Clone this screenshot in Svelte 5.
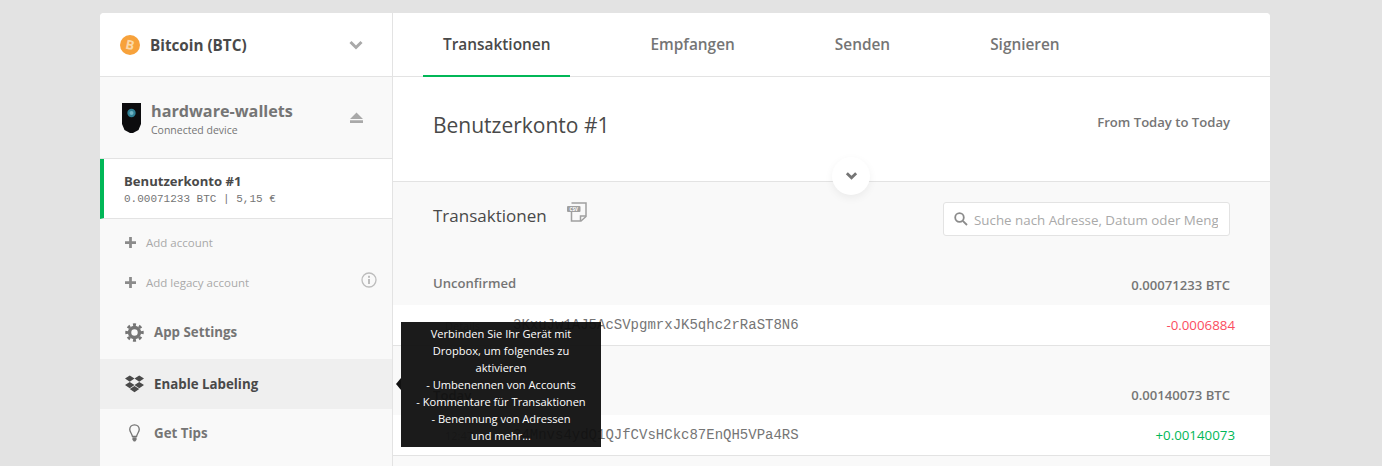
<script>
    const tabs = ['Transaktionen', 'Empfangen', 'Senden', 'Signieren'];
    const groups = [
        {
            label: 'Unconfirmed',
            total: '0.00071233 BTC',
            time: 'Details',
            address: '3KxuJw1AJ5AcSVpgmrxJK5qhc2rRaST8N6',
            amount: '-0.0006884',
            kind: 'out'
        },
        {
            label: 'Today',
            total: '0.00140073 BTC',
            time: '12:47',
            address: '34Mnvs4ydQ1QJfCVsHCkc87EnQH5VPa4RS',
            amount: '+0.00140073',
            kind: 'in'
        }
    ];
</script>

<div class="page">
    <div class="app">
        <aside class="sidebar">
            <div class="coin">
                <svg class="coin-logo" viewBox="0 0 20 20">
                    <circle cx="10" cy="10" r="10" fill="#f7a23b" />
                    <text x="10" y="14.5" text-anchor="middle" transform="rotate(12 10 10)">B</text>
                </svg>
                <span class="coin-name">Bitcoin (BTC)</span>
                <svg class="chevron" viewBox="0 0 14 10">
                    <polyline points="1.5,2 7,7.5 12.5,2" />
                </svg>
            </div>

            <div class="device">
                <svg class="device-img" viewBox="0 0 19 30">
                    <path d="M0 0H19V21L16.500 27L11 30H8L2.500 27L0 21Z" fill="#0c0c0e" />
                    <circle cx="9.5" cy="10" r="4.2" fill="#2f7f94" />
                    <circle cx="9.5" cy="10" r="2" fill="#6fb4c4" />
                </svg>
                <div class="device-info">
                    <div class="device-name">hardware-wallets</div>
                    <div class="device-status">Connected device</div>
                </div>
                <svg class="eject" viewBox="0 0 14 12">
                    <path d="M7 0L14 7H0Z M0 8.500H14V11.500H0Z" />
                </svg>
            </div>

            <div class="account">
                <div class="account-name">Benutzerkonto #1</div>
                <div class="account-balance">0.00071233 BTC | 5,15 €</div>
            </div>

            <div class="add-row first">
                <svg class="plus" viewBox="0 0 12 12"><path d="M4.500 0H7.500V4.500H12V7.500H7.500V12H4.500V7.500H0V4.500H4.500Z" /></svg>
                <span>Add account</span>
            </div>
            <div class="add-row">
                <svg class="plus" viewBox="0 0 12 12"><path d="M4.500 0H7.500V4.500H12V7.500H7.500V12H4.500V7.500H0V4.500H4.500Z" /></svg>
                <span>Add legacy account</span>
                <svg class="info" viewBox="0 0 16 16">
                    <circle cx="8" cy="8" r="7" />
                    <rect x="7" y="7" width="2" height="5" />
                    <rect x="7" y="3.800" width="2" height="2" />
                </svg>
            </div>

            <div class="nav-row settings">
                <svg class="nav-icon" viewBox="0 0 20 20">
                    <circle class="gear-ring" cx="10" cy="10" r="5.200" />
                    <circle class="gear-teeth" cx="10" cy="10" r="8.200" pathLength="16" />
                </svg>
                <span>App Settings</span>
            </div>
            <div class="nav-row active">
                <svg class="nav-icon" viewBox="0 0 20 18">
                    <path d="M5 0L10 3.300L5 6.600L0 3.300Z M15 0L20 3.300L15 6.600L10 3.300Z M5 6.800L10 10.100L5 13.400L0 10.100Z M15 6.800L20 10.100L15 13.400L10 10.100Z M5 14.300L10 11.100L15 14.300L10 17.600Z" />
                </svg>
                <span>Enable Labeling</span>
            </div>
            <div class="nav-row tips">
                <svg class="nav-icon bulb" viewBox="0 0 20 20">
                    <path class="bulb-glass" d="M10 1.500C6.800 1.500 5 3.800 5 6.300C5 9 7.300 10.500 7.800 13.500H12.200C12.700 10.500 15 9 15 6.300C15 3.800 13.200 1.500 10 1.500Z" />
                    <path class="bulb-base" d="M7.800 14.500H12.200V17L10.800 19H9.200L7.800 17Z" />
                </svg>
                <span>Get Tips</span>
            </div>

            <div class="tooltip">
                <span class="tooltip-arrow"></span>
                Verbinden Sie Ihr Gerät mit Dropbox, um folgendes zu aktivieren<br />
                - Umbenennen von Accounts<br />
                - Kommentare für Transaktionen<br />
                - Benennung von Adressen<br />
                und mehr...
            </div>
        </aside>

        <main class="content">
            <nav class="tabs">
                {#each tabs as tab, i}
                    <div class="tab" class:selected={i === 0}>{tab}</div>
                {/each}
            </nav>

            <section class="summary">
                <h2>Benutzerkonto #1</h2>
                <div class="range">From Today to Today</div>
                <div class="toggle">
                    <svg viewBox="0 0 14 10"><polyline points="2,2 7,7 12,2" /></svg>
                </div>
            </section>

            <section class="history">
                <div class="history-head">
                    <h3>Transaktionen</h3>
                    <svg class="csv" viewBox="0 0 20 20">
                        <path class="csv-page" d="M4.500 4V19H14L19 14.500V1H4.500" />
                        <path class="csv-fold" d="M13.500 19V14H19" />
                        <rect class="csv-badge" x="0" y="4" width="13.500" height="6" rx="1" />
                        <text x="6.750" y="8.800">CSV</text>
                    </svg>
                    <label class="search">
                        <svg viewBox="0 0 14 14">
                            <circle cx="5.500" cy="5.500" r="4.300" />
                            <line x1="8.800" y1="8.800" x2="13" y2="13" />
                        </svg>
                        <input type="text" placeholder="Suche nach Adresse, Datum oder Menge" />
                    </label>
                </div>

                {#each groups as group}
                    <div class="group">
                        <div class="group-head">
                            <span class="group-label">{group.label}</span>
                            <span class="group-total">{group.total}</span>
                        </div>
                        <div class="tx">
                            <span class="tx-time">{group.time}</span>
                            <span class="tx-address">{group.address}</span>
                            <span class="tx-amount {group.kind}">{group.amount}</span>
                        </div>
                    </div>
                {/each}
            </section>
        </main>
    </div>
</div>

<style>
    :global(body) {
        margin: 0;
        background: #e3e3e3;
        overflow: hidden;
    }

    .page {
        height: 466px;
        overflow: hidden;
        padding-top: 13px;
        box-sizing: border-box;
        font-family: 'Open Sans', sans-serif;
        color: #494949;
    }

    .app {
        width: 1170px;
        height: 600px;
        margin-left: 100px;
        display: flex;
        background: #f9f9f9;
        border-radius: 4px 4px 0 0;
    }

    /* left column */
    .sidebar {
        position: relative;
        width: 292px;
        flex-shrink: 0;
        border-right: 1px solid #e3e3e3;
    }

    .coin {
        height: 63px;
        display: flex;
        align-items: center;
        padding: 0 29px 0 20px;
        background: #fff;
        border-bottom: 1px solid #e3e3e3;
        border-radius: 4px 0 0 0;
    }

    .coin-logo {
        width: 20px;
        height: 20px;
        margin-right: 10px;
    }

    .coin-logo text {
        font: 700 13px 'Open Sans', sans-serif;
        fill: #fbd9a8;
    }

    .coin-name {
        flex: 1;
        font-size: 15.250px;
        font-weight: 700;
        color: #494949;
    }

    .chevron {
        width: 14px;
        height: 10px;
        fill: none;
        stroke: #a9a9a9;
        stroke-width: 3;
    }

    .device {
        height: 81px;
        display: flex;
        align-items: center;
        padding: 0 29px 0 22px;
        border-bottom: 1px solid #e3e3e3;
    }

    .device-img {
        width: 19px;
        height: 30px;
        margin-right: 10px;
    }

    .device-info {
        flex: 1;
        padding-top: 2px;
    }

    .device-name {
        font-size: 16.200px;
        font-weight: 700;
        line-height: 23px;
        color: #757575;
    }

    .device-status {
        font-size: 10.500px;
        line-height: 15px;
        color: #757575;
    }

    .eject {
        width: 13px;
        height: 12px;
        fill: #a9a9a9;
    }

    .account {
        height: 60px;
        padding: 13px 0 0 20px;
        box-sizing: border-box;
        background: #fff;
        border-left: 4px solid #01b757;
        border-bottom: 1px solid #e3e3e3;
    }

    .account-name {
        font-size: 13.100px;
        font-weight: 700;
        line-height: 18px;
        color: #494949;
    }

    .account-balance {
        font-family: 'Liberation Mono', monospace;
        font-size: 11px;
        line-height: 18px;
        color: #757575;
    }

    .add-row {
        height: 40px;
        display: flex;
        align-items: center;
        padding: 0 15px 0 25px;
        font-size: 11.500px;
        color: #a9a9a9;
    }

    .add-row.first {
        margin-top: 3px;
    }

    .add-row span {
        flex: 1;
    }

    .plus {
        width: 11px;
        height: 11px;
        margin-right: 10px;
        fill: #8b8b8b;
    }

    .info {
        width: 16px;
        height: 16px;
        margin-top: -5px;
        fill: #bdbdbd;
    }

    .info circle {
        fill: none;
        stroke: #bdbdbd;
        stroke-width: 1.300;
    }

    .nav-row {
        height: 50px;
        display: flex;
        align-items: center;
        padding-left: 25px;
        font-size: 13.300px;
        font-weight: 700;
        color: #757575;
    }

    .nav-row.settings {
        margin-top: 3px;
        height: 54px;
    }

    .nav-row.active {
        background: #efefef;
        color: #494949;
    }

    .nav-row.tips {
        height: 48px;
    }

    .nav-icon {
        width: 19px;
        height: 18px;
        margin-right: 10px;
        fill: #494949;
    }

    .settings .nav-icon {
        height: 19px;
        width: 19px;
    }

    .gear-ring {
        fill: none;
        stroke: #757575;
        stroke-width: 3.600;
    }

    .gear-teeth {
        fill: none;
        stroke: #757575;
        stroke-width: 3;
        stroke-dasharray: 1 1;
        stroke-dashoffset: 0.500;
    }

    .bulb {
        height: 20px;
    }

    .bulb-glass {
        fill: none;
        stroke: #757575;
        stroke-width: 1.400;
    }

    .bulb-base {
        fill: #757575;
    }

    .tooltip {
        position: absolute;
        z-index: 5;
        left: 301px;
        top: 309px;
        width: 200px;
        height: 125px;
        padding: 3px 10px 0;
        box-sizing: border-box;
        background: rgba(15, 15, 15, 0.95);
        color: #fff;
        font-size: 11.100px;
        line-height: 17px;
        text-align: center;
    }

    .tooltip-arrow {
        position: absolute;
        left: -5px;
        top: 56px;
        border-style: solid;
        border-width: 6px 5px 6px 0;
        border-color: transparent #111 transparent transparent;
    }

    /* right column */
    .content {
        flex: 1;
        min-width: 0;
    }

    .tabs {
        height: 63px;
        display: flex;
        padding-left: 30px;
        gap: 60px;
        background: #fff;
        border-bottom: 1px solid #e3e3e3;
        border-radius: 0 4px 0 0;
    }

    .tab {
        height: 64px;
        box-sizing: border-box;
        padding: 0 20px;
        line-height: 63px;
        font-size: 15.400px;
        font-weight: 600;
        color: #757575;
    }

    .tab.selected {
        color: #494949;
        border-bottom: 2px solid #01b757;
    }

    .summary {
        position: relative;
        height: 104px;
        display: flex;
        justify-content: space-between;
        padding: 0 40px;
        background: #fff;
        border-bottom: 1px solid #e3e3e3;
    }

    .summary h2 {
        margin: 34px 0 0;
        font-size: 21px;
        font-weight: 400;
        line-height: 28px;
        color: #494949;
    }

    .range {
        margin-top: 36px;
        font-size: 13.100px;
        font-weight: 600;
        line-height: 18px;
        color: #757575;
    }

    .toggle {
        position: absolute;
        left: 439px;
        top: 80px;
        width: 38px;
        height: 38px;
        display: flex;
        align-items: center;
        justify-content: center;
        border-radius: 50%;
        background: #fff;
        box-shadow: 0 3px 8px rgba(0, 0, 0, 0.06);
    }

    .toggle svg {
        width: 13px;
        height: 10px;
        fill: none;
        stroke: #757575;
        stroke-width: 3;
    }

    .history-head {
        height: 80px;
        display: flex;
        padding: 0 40px;
    }

    .history-head h3 {
        margin: 22px 0 0;
        font-size: 17px;
        font-weight: 400;
        line-height: 24px;
        color: #494949;
    }

    .csv {
        width: 20px;
        height: 20px;
        margin: 20px 0 0 20px;
    }

    .csv-page,
    .csv-fold {
        fill: none;
        stroke: #a0a0a0;
        stroke-width: 1.500;
    }

    .csv-badge {
        fill: #a0a0a0;
    }

    .csv text {
        font: 700 4.500px 'Open Sans', sans-serif;
        fill: #fff;
        text-anchor: middle;
    }

    .search {
        width: 287px;
        height: 34px;
        margin: 20px 0 0 auto;
        display: flex;
        align-items: center;
        padding-left: 10px;
        box-sizing: border-box;
        background: #fff;
        border: 1px solid #e3e3e3;
        border-radius: 3px;
    }

    .search svg {
        width: 14px;
        height: 14px;
        margin-right: 6px;
        flex-shrink: 0;
        fill: none;
        stroke: #8b8b8b;
        stroke-width: 1.800;
    }

    .search input {
        flex: 1;
        min-width: 0;
        margin: 1px 11px 0 0;
        padding: 0;
        border: 0;
        outline: 0;
        background: transparent;
        font: 400 13.350px 'Open Sans', sans-serif;
    }

    .search input::placeholder {
        color: #a9a9a9;
        opacity: 1;
    }

    .group-head {
        height: 43px;
        display: flex;
        justify-content: space-between;
        padding: 0 40px;
        font-size: 13.100px;
        font-weight: 600;
        color: #757575;
    }

    .group-label {
        margin-top: 12px;
    }

    .group-total {
        margin-top: 14px;
    }

    .group + .group .group-head {
        height: 69px;
        align-items: flex-end;
        padding-bottom: 11px;
        box-sizing: border-box;
    }

    .tx {
        height: 40px;
        display: flex;
        align-items: center;
        padding-right: 35px;
        background: #fff;
        border-bottom: 1px solid #e3e3e3;
    }

    .tx-time {
        width: 120px;
        padding-left: 52px;
        box-sizing: border-box;
        font-size: 11px;
        color: #a9a9a9;
    }

    .tx-address {
        flex: 1;
        font-family: 'Liberation Mono', monospace;
        font-size: 14px;
        color: #757575;
    }

    .tx-amount {
        font-size: 13.300px;
    }

    .tx-amount.out {
        color: #fb4d60;
    }

    .tx-amount.in {
        color: #01b757;
    }
</style>
